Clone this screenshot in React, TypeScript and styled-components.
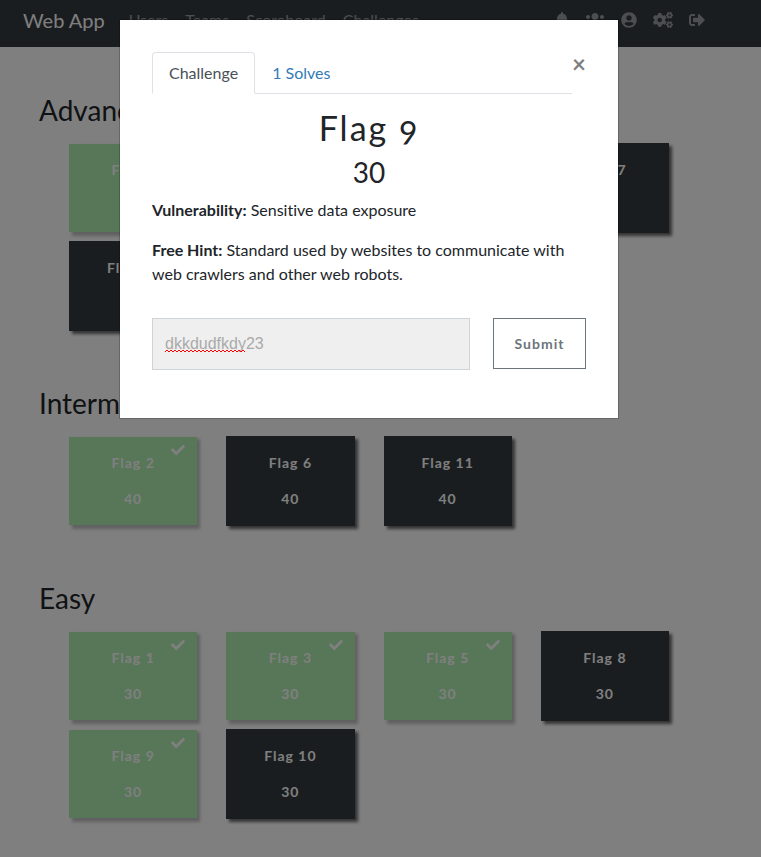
import React from "react";
import styled, { createGlobalStyle, css } from "styled-components";
import { FaBell, FaUsers, FaUserCircle, FaCogs, FaSignOutAlt, FaCheck } from "react-icons/fa";

const GlobalStyle = createGlobalStyle`
  *, *::before, *::after { box-sizing: border-box; }
  body {
    margin: 0;
    background: #fff;
    color: #212529;
    font: 400 16px/24px Lato, "Liberation Sans", sans-serif;
    font-variant-ligatures: none;
  }
  h1, h2, h3, p, ul { margin: 0; padding: 0; }
  ul { list-style: none; }
  button, input { font-family: inherit; }
`;

const Page = styled.div`
  min-height: 100vh;
`;

const NavBar = styled.header`
  display: flex;
  align-items: center;
  padding: 0 56px 8px 23px;
  min-height: 47px;
  background: #343a40;
`;

const Brand = styled.a`
  margin-right: 24px;
  color: #fff;
  font-size: 20px;
  line-height: 30px;
  text-decoration: none;
`;

const NavLinks = styled.nav`
  display: flex;
  flex: 1;
  gap: 17px;
`;

const NavLink = styled.a`
  color: rgba(255, 255, 255, 0.5);
  text-decoration: none;
`;

const NavIcons = styled.nav`
  display: flex;
  align-items: center;
  gap: 16px;
`;

const IconLink = styled.a<{ $width: number }>`
  display: flex;
  color: rgba(255, 255, 255, 0.5);

  svg {
    width: ${(p) => p.$width}px;
    height: 16px;
  }
`;

const Board = styled.main`
  padding: 46px 92px 0 39px;
`;

const Category = styled.section`
  margin-bottom: 55px;

  &:last-child {
    margin-bottom: 0;
  }
`;

const CategoryTitle = styled.h3`
  margin-bottom: 16px;
  font-weight: 400;
  font-size: 28px;
  line-height: 34px;
`;

const CardGrid = styled.div`
  display: grid;
  grid-template-columns: repeat(4, 1fr);
  gap: 8px 29px;
  padding-left: 30px;
`;

const Card = styled.button<{ $solved?: boolean }>`
  position: relative;
  display: flex;
  flex-direction: column;
  align-items: center;
  gap: 12px;
  height: 90px;
  padding: 14px 0 0;
  border: solid #343a40;
  border-width: 1px 0;
  background: #343a40;
  color: #fff;
  font-weight: 700;
  font-size: 14px;
  line-height: 24px;
  letter-spacing: 1px;
  box-shadow: 3px 3px 3px rgba(0, 0, 0, 0.6);
  ${(p) =>
    p.$solved &&
    css`
      border-color: transparent;
      background: #37d63e;
      background-clip: padding-box;
      opacity: 0.4;
    `}
`;

const Tick = styled(FaCheck)`
  position: absolute;
  top: 6px;
  right: 12px;
  font-size: 14px;
`;

const Backdrop = styled.div`
  position: fixed;
  inset: 0;
  display: flex;
  align-items: flex-start;
  justify-content: center;
  padding: 19px 23px 0 0;
  background: rgba(0, 0, 0, 0.5);
`;

const Dialog = styled.div`
  width: 100%;
  max-width: 500px;
  padding: 32px 32px 48px;
  border: 1px solid rgba(0, 0, 0, 0.2);
  background: #fff;
  background-clip: padding-box;
`;

const DialogHead = styled.div`
  display: flex;
  align-items: flex-start;
`;

const Tabs = styled.div`
  display: flex;
  flex: 1;
  border-bottom: 1px solid #dee2e6;
`;

const Tab = styled.button<{ $active?: boolean }>`
  margin-bottom: -1px;
  padding: 8px 16px;
  border: 1px solid transparent;
  border-radius: 4px 4px 0 0;
  background: transparent;
  color: #337ab7;
  font-size: 16px;
  line-height: 24px;
  ${(p) =>
    p.$active &&
    css`
      border-color: #dee2e6 #dee2e6 #fff;
      background: #fff;
      color: #495057;
    `}
`;

const Close = styled.button`
  width: 14px;
  padding: 0;
  border: 0;
  background: transparent;
  color: #000;
  font-weight: 700;
  font-size: 24px;
  line-height: 24px;
  opacity: 0.5;
`;

const ChallengeName = styled.h2`
  margin: 15px 0 8px;
  font-weight: 400;
  font-size: 34px;
  line-height: 38px;
  letter-spacing: 2px;
  font-variant-numeric: oldstyle-nums;
  text-align: center;
`;

const Points = styled.h3`
  margin-bottom: 9px;
  font-weight: 400;
  font-size: 28px;
  line-height: 34px;
  text-align: center;
`;

const Description = styled.p`
  margin-bottom: 16px;
`;

const AnswerForm = styled.form`
  display: flex;
  gap: 23px;
  margin-top: 32px;
`;

const AnswerField = styled.div`
  position: relative;
  flex: 1;
`;

const AnswerInput = styled.input`
  width: 100%;
  height: 52px;
  padding: 0 12px;
  border: 1px solid #ced4da;
  border-radius: 0;
  background: #efefef;
  color: #aaa;
  font: 400 16px/24px "Liberation Sans", Arial, sans-serif;
`;

const Squiggle = styled.svg`
  position: absolute;
  top: 31px;
  left: 13px;
  width: 81px;
  height: 4px;
  pointer-events: none;
`;

const Submit = styled.button`
  width: 93px;
  height: 51px;
  padding: 0;
  border: 1px solid #6c757d;
  background: #fff;
  color: #6c757d;
  font-weight: 700;
  font-size: 14px;
  letter-spacing: 1px;
`;

type Challenge = { name: string; points: number; solved?: boolean };

const categories: { title: string; items: Challenge[] }[] = [
  {
    title: "Advanced",
    items: [
      { name: "Flag 4", points: 50, solved: true },
      { name: "Flag 12", points: 50 },
      { name: "Flag 13", points: 50 },
      { name: "Flag 7", points: 50 },
      { name: "Flag 14", points: 50 },
    ],
  },
  {
    title: "Intermediate",
    items: [
      { name: "Flag 2", points: 40, solved: true },
      { name: "Flag 6", points: 40 },
      { name: "Flag 11", points: 40 },
    ],
  },
  {
    title: "Easy",
    items: [
      { name: "Flag 1", points: 30, solved: true },
      { name: "Flag 3", points: 30, solved: true },
      { name: "Flag 5", points: 30, solved: true },
      { name: "Flag 8", points: 30 },
      { name: "Flag 9", points: 30, solved: true },
      { name: "Flag 10", points: 30 },
    ],
  },
];

const actions = [
  { label: "Notifications", Icon: FaBell, width: 14 },
  { label: "Team", Icon: FaUsers, width: 20 },
  { label: "Profile", Icon: FaUserCircle, width: 16 },
  { label: "Settings", Icon: FaCogs, width: 20 },
  { label: "Log out", Icon: FaSignOutAlt, width: 16 },
];

const squigglePath =
  "M0 3" + Array.from({ length: 20 }, (_, i) => `L${i * 4 + 2} 1L${i * 4 + 4} 3`).join("");

export default function App() {
  return (
    <Page>
      <GlobalStyle />
      <NavBar>
        <Brand href="#">Web App</Brand>
        <NavLinks>
          {["Users", "Teams", "Scoreboard", "Challenges"].map((label) => (
            <NavLink key={label} href="#">
              {label}
            </NavLink>
          ))}
        </NavLinks>
        <NavIcons>
          {actions.map(({ label, Icon, width }) => (
            <IconLink key={label} href="#" aria-label={label} $width={width}>
              <Icon />
            </IconLink>
          ))}
        </NavIcons>
      </NavBar>
      <Board>
        {categories.map((category) => (
          <Category key={category.title}>
            <CategoryTitle>{category.title}</CategoryTitle>
            <CardGrid>
              {category.items.map((item) => (
                <Card key={item.name} type="button" $solved={item.solved}>
                  <span>{item.name}</span>
                  <span>{item.points}</span>
                  {item.solved && <Tick />}
                </Card>
              ))}
            </CardGrid>
          </Category>
        ))}
      </Board>
      <Backdrop>
        <Dialog role="dialog" aria-modal="true" aria-labelledby="challenge-name">
          <DialogHead>
            <Tabs role="tablist">
              <Tab type="button" role="tab" aria-selected="true" $active>
                Challenge
              </Tab>
              <Tab type="button" role="tab" aria-selected="false">
                1 Solves
              </Tab>
            </Tabs>
            <Close type="button" aria-label="Close">
              ×
            </Close>
          </DialogHead>
          <ChallengeName id="challenge-name">Flag 9</ChallengeName>
          <Points>30</Points>
          <Description>
            <strong>Vulnerability:</strong> Sensitive data exposure
          </Description>
          <Description>
            <strong>Free Hint:</strong> Standard used by websites to communicate with web crawlers
            and other web robots.
          </Description>
          <AnswerForm onSubmit={(e: React.FormEvent) => e.preventDefault()}>
            <AnswerField>
              <AnswerInput aria-label="Flag" defaultValue="dkkdudfkdy23" spellCheck={false} />
              <Squiggle viewBox="0 0 81 4" aria-hidden="true">
                <path d={squigglePath} fill="none" stroke="#f00" strokeWidth="1" />
              </Squiggle>
            </AnswerField>
            <Submit type="submit">Submit</Submit>
          </AnswerForm>
        </Dialog>
      </Backdrop>
    </Page>
  );
}
